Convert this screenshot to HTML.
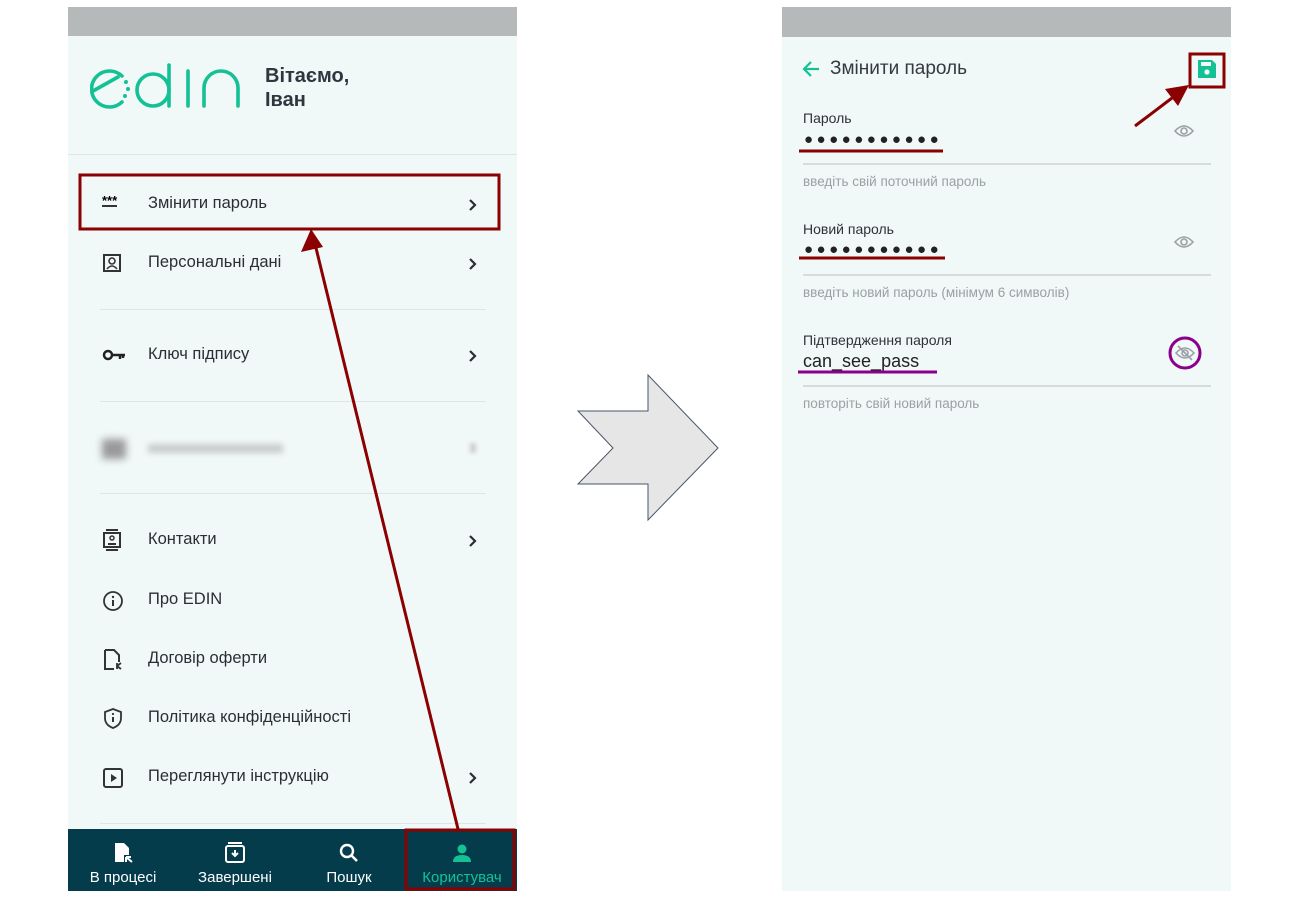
<!DOCTYPE html>
<html><head><meta charset="utf-8"><style>
body{margin:0;width:1300px;height:900px;background:#fff;position:relative;font-family:"Liberation Sans",sans-serif;overflow:hidden}
.p{position:absolute;background:#f1f8f8}
.bar{position:absolute;left:0;right:0;top:0;height:29px;background:#b5b9b9}
.t{position:absolute;color:#2a2f35;font-size:16.5px;white-space:nowrap}
.hr{position:absolute;height:1px;background:#dfe4e4}
.chev{position:absolute;left:400px}
.ic{position:absolute;left:34px}
.nav{position:absolute;left:0;right:0;bottom:0;height:62px;background:#053c4c}
.ni{position:absolute;top:0;width:110px;text-align:center;color:#fff;font-size:15px}
.lab{position:absolute;left:21px;font-size:14px;color:#2d3238}
.hint{position:absolute;left:21px;font-size:13.5px;color:#9aa0a4}
.dots{position:absolute;left:22px;font-size:15px;letter-spacing:3.5px;color:#222}
</style></head><body>
<div class="p" style="left:68px;top:7px;width:449px;height:884px">
 <div class="bar"></div>
 <svg style="position:absolute;left:22px;top:53px" width="155" height="52" viewBox="0 0 155 52">
  <g fill="none" stroke="#14c195" stroke-width="3.6" stroke-linecap="round">
   <path d="M32 16 A18 18 0 1 0 32 42"/><path d="M3 31 L28 17"/>
   <circle cx="63" cy="30" r="16"/><path d="M79 5 V46"/>
   <path d="M98 11 V46"/><path d="M114 46 V28 A17 17 0 0 1 148 28 V46"/>
  </g>
  <circle cx="36" cy="22" r="2" fill="#14c195"/><circle cx="38" cy="29" r="2" fill="#14c195"/><circle cx="35" cy="36" r="2" fill="#14c195"/>
 </svg>
 <div class="t" style="left:197px;top:57px;font-size:20px;font-weight:bold;line-height:24px;color:#2f3640">Вітаємо,<br>Іван</div>
 <div class="hr" style="left:0;right:0;top:147px"></div>
 <div class="ic" style="top:190px;font-size:13px;font-weight:bold;border-bottom:2px solid #333;line-height:8px;letter-spacing:0px">***</div>
 <div class="t" style="left:80px;top:187px">Змінити пароль</div><svg class="chev" style="top:191px" width="10" height="14"><path d="M2 2L7 7L2 12" fill="none" stroke="#2a2f35" stroke-width="2.2"/></svg>
 <svg class="ic" style="top:246px" width="20" height="20"><rect x="2" y="2" width="16" height="16" fill="none" stroke="#333" stroke-width="2"/><circle cx="10" cy="8" r="3" fill="none" stroke="#333" stroke-width="1.6"/><path d="M5 16 Q10 10 15 16" fill="none" stroke="#333" stroke-width="1.6"/></svg>
 <div class="t" style="left:80px;top:246px">Персональні дані</div><svg class="chev" style="top:250px" width="10" height="14"><path d="M2 2L7 7L2 12" fill="none" stroke="#2a2f35" stroke-width="2.2"/></svg>
 <div class="hr" style="left:32px;width:386px;top:302px"></div>
 <svg class="ic" style="top:341px" width="24" height="14"><circle cx="6" cy="7" r="4" fill="none" stroke="#222" stroke-width="2.5"/><path d="M10 7H23M18 7v4M21 7v3" stroke="#222" stroke-width="2.5"/></svg>
 <div class="t" style="left:80px;top:338px">Ключ підпису</div><svg class="chev" style="top:342px" width="10" height="14"><path d="M2 2L7 7L2 12" fill="none" stroke="#2a2f35" stroke-width="2.2"/></svg>
 <div class="hr" style="left:32px;width:386px;top:394px"></div>
 <div style="position:absolute;left:34px;top:432px;width:24px;height:20px;background:#999;filter:blur(4px)"></div>
 <div style="position:absolute;left:80px;top:437px;width:135px;height:9px;background:#c8cccc;filter:blur(3px)"></div>
 <div style="position:absolute;left:402px;top:436px;width:6px;height:10px;background:#ccc;filter:blur(2px)"></div>
 <div class="hr" style="left:32px;width:386px;top:486px"></div>
 <svg class="ic" style="top:521px" width="20" height="24"><path d="M4 2H16M4 22H16" stroke="#333" stroke-width="2"/><rect x="2" y="5" width="16" height="14" fill="none" stroke="#333" stroke-width="2"/><circle cx="10" cy="10" r="2" fill="none" stroke="#333" stroke-width="1.5"/><path d="M6 16H14" stroke="#333" stroke-width="2"/></svg>
 <div class="t" style="left:80px;top:523px">Контакти</div><svg class="chev" style="top:527px" width="10" height="14"><path d="M2 2L7 7L2 12" fill="none" stroke="#2a2f35" stroke-width="2.2"/></svg>
 <svg class="ic" style="top:583px" width="22" height="22"><circle cx="11" cy="11" r="9" fill="none" stroke="#333" stroke-width="1.8"/><path d="M11 10V16" stroke="#333" stroke-width="2"/><circle cx="11" cy="7" r="1.2" fill="#333"/></svg>
 <div class="t" style="left:80px;top:583px">Про EDIN</div>
 <svg class="ic" style="top:641px" width="22" height="24"><path d="M3 2H12L17 7V14M3 2V21H12" fill="none" stroke="#333" stroke-width="2"/><path d="M15 15V21M15 18L19 15M15 18L19 21" stroke="#333" stroke-width="1.8"/></svg>
 <div class="t" style="left:80px;top:642px">Договір оферти</div>
 <svg class="ic" style="top:700px" width="22" height="22"><path d="M11 2L19 5V11Q19 18 11 21Q3 18 3 11V5Z" fill="none" stroke="#333" stroke-width="1.8"/><path d="M11 10V15" stroke="#333" stroke-width="2"/><circle cx="11" cy="7" r="1.1" fill="#333"/></svg>
 <div class="t" style="left:80px;top:701px">Політика конфіденційності</div>
 <svg class="ic" style="top:760px" width="22" height="22"><rect x="2" y="2" width="18" height="18" rx="2" fill="none" stroke="#333" stroke-width="2"/><path d="M9 7L15 11L9 15Z" fill="#333"/></svg>
 <div class="t" style="left:80px;top:760px">Переглянути інструкцію</div><svg class="chev" style="top:764px" width="10" height="14"><path d="M2 2L7 7L2 12" fill="none" stroke="#2a2f35" stroke-width="2.2"/></svg>
 <div class="hr" style="left:32px;width:386px;top:816px"></div>
 <div class="nav">
  <div class="ni" style="left:0"><svg style="margin-top:12px" width="24" height="24"><path d="M4 2H13L18 7V14H13V21H4Z" fill="#fff"/><path d="M15 16V21M15 16H20M15 16L21 21" stroke="#fff" stroke-width="2"/></svg><div>В процесі</div></div>
  <div class="ni" style="left:112px"><svg style="margin-top:12px" width="24" height="24"><rect x="3" y="5" width="18" height="16" rx="2" fill="none" stroke="#fff" stroke-width="2"/><path d="M5 2H19" stroke="#fff" stroke-width="2"/><path d="M9 12L12 15L15 12M12 9V15" stroke="#fff" stroke-width="2" fill="none"/></svg><div>Завершені</div></div>
  <div class="ni" style="left:226px"><svg style="margin-top:12px" width="24" height="24"><circle cx="10" cy="10" r="6" fill="none" stroke="#fff" stroke-width="2.4"/><path d="M14 14L20 20" stroke="#fff" stroke-width="2.6"/></svg><div>Пошук</div></div>
  <div class="ni" style="left:339px;color:#14c195"><svg style="margin-top:12px" width="24" height="24"><circle cx="12" cy="8" r="4.5" fill="#14c195"/><path d="M3 21Q3 14 12 14Q21 14 21 21Z" fill="#14c195"/></svg><div>Користувач</div></div>
 </div>
</div>

<div class="p" style="left:782px;top:7px;width:449px;height:884px">
 <div class="bar" style="height:30px"></div>
 <svg style="position:absolute;left:19px;top:52px" width="20" height="20"><path d="M18 10H3M10 3L3 10L10 17" fill="none" stroke="#14c195" stroke-width="2.2"/></svg>
 <div class="t" style="left:48px;top:51px;font-size:19px;color:#333a40">Змінити пароль</div>
 <svg style="position:absolute;left:414px;top:51px" width="22" height="22"><path d="M2 2H16L20 6V20H2Z" fill="#14c195"/><rect x="5" y="4" width="10" height="4" fill="#f1f8f8"/><circle cx="11" cy="14" r="2.6" fill="#f1f8f8"/></svg>
 <div class="lab" style="top:103px">Пароль</div>
 <div class="dots" style="top:124px">●●●●●●●●●●●</div>
 <svg style="position:absolute;left:391px;top:116px" width="22" height="16"><path d="M2 8Q11 -2 20 8Q11 18 2 8Z" fill="none" stroke="#9aa0a4" stroke-width="1.6"/><circle cx="11" cy="8" r="3" fill="none" stroke="#9aa0a4" stroke-width="1.6"/></svg>
 <div class="hr" style="left:21px;width:408px;top:156px;background:#d6dcdc;height:2px"></div>
 <div class="hint" style="top:167px">введіть свій поточний пароль</div>
 <div class="lab" style="top:214px">Новий пароль</div>
 <div class="dots" style="top:234px">●●●●●●●●●●●</div>
 <svg style="position:absolute;left:391px;top:227px" width="22" height="16"><path d="M2 8Q11 -2 20 8Q11 18 2 8Z" fill="none" stroke="#9aa0a4" stroke-width="1.6"/><circle cx="11" cy="8" r="3" fill="none" stroke="#9aa0a4" stroke-width="1.6"/></svg>
 <div class="hr" style="left:21px;width:408px;top:267px;background:#d6dcdc;height:2px"></div>
 <div class="hint" style="top:278px">введіть новий пароль (мінімум 6 символів)</div>
 <div class="lab" style="top:325px">Підтвердження пароля</div>
 <div class="t" style="left:21px;top:344px;font-size:18px;color:#222">can_see_pass</div>
 <svg style="position:absolute;left:392px;top:338px" width="22" height="16"><path d="M2 8Q11 -2 20 8Q11 18 2 8Z" fill="none" stroke="#9aa0a4" stroke-width="1.6"/><circle cx="11" cy="8" r="3" fill="none" stroke="#9aa0a4" stroke-width="1.6"/><path d="M4 1L18 15" stroke="#9aa0a4" stroke-width="1.6"/></svg>
 <div class="hr" style="left:21px;width:408px;top:378px;background:#d6dcdc;height:2px"></div>
 <div class="hint" style="top:389px">повторіть свій новий пароль</div>
</div>

<svg style="position:absolute;left:0;top:0" width="1300" height="900">
 <polygon points="578,411 648,411 648,375 718,448 648,520 648,484 578,484 613,448" fill="#e6e6e6" stroke="#4a5468" stroke-width="1"/>
 <rect x="80" y="175" width="419" height="54" fill="none" stroke="#8b0000" stroke-width="3"/>
 <rect x="406" y="830" width="108" height="59" fill="none" stroke="#8b0000" stroke-width="3"/>
 <line x1="458" y1="829" x2="316" y2="248" stroke="#8b0000" stroke-width="3"/>
 <polygon points="311,229 301,252 323,247" fill="#8b0000"/>
 <rect x="1190" y="54" width="34" height="33" fill="none" stroke="#8b0000" stroke-width="3"/>
 <line x1="1135" y1="126" x2="1172" y2="98" stroke="#8b0000" stroke-width="3"/>
 <polygon points="1189,85 1165,89 1178,106" fill="#8b0000"/>
 <line x1="799" y1="151" x2="943" y2="151" stroke="#8b0000" stroke-width="3"/>
 <line x1="799" y1="258" x2="945" y2="258" stroke="#8b0000" stroke-width="3"/>
 <line x1="798" y1="372" x2="937" y2="372" stroke="#8b008b" stroke-width="3"/>
 <circle cx="1185" cy="353" r="15" fill="none" stroke="#8b008b" stroke-width="3"/>
</svg>
</body></html>
